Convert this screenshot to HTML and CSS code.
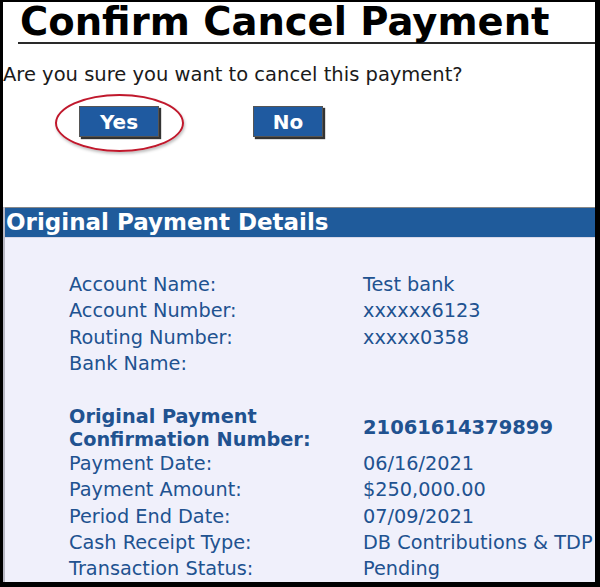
FILE: index.html
```html
<!DOCTYPE html>
<html lang="en">
<head>
<meta charset="utf-8">
<title>Confirm Cancel Payment</title>
<link rel="stylesheet" href="styles.css">
</head>
<body>
<div class="frame">
  <h1 class="title">Confirm Cancel Payment</h1>
  <p class="question">Are you sure you want to cancel this payment?</p>
  <div class="actions">
    <span class="btn-wrap highlighted"><button class="btn btn-yes">Yes</button></span>
    <span class="btn-wrap"><button class="btn btn-no">No</button></span>
  </div>
  <section class="details">
    <h2 class="details-head">Original Payment Details</h2>
    <div class="details-body">
      <div class="grid">
        <span class="lbl">Account Name:</span><span class="val">Test bank</span>
        <span class="lbl">Account Number:</span><span class="val">xxxxxx6123</span>
        <span class="lbl">Routing Number:</span><span class="val">xxxxx0358</span>
        <span class="lbl">Bank Name:</span><span class="val"></span>
      </div>
      <div class="grid conf">
        <span class="lbl strong">Original Payment<br>Confirmation Number:</span><span class="val strong">21061614379899</span>
      </div>
      <div class="grid">
        <span class="lbl">Payment Date:</span><span class="val">06/16/2021</span>
        <span class="lbl">Payment Amount:</span><span class="val">$250,000.00</span>
        <span class="lbl">Period End Date:</span><span class="val">07/09/2021</span>
        <span class="lbl">Cash Receipt Type:</span><span class="val">DB Contributions &amp; TDP</span>
        <span class="lbl">Transaction Status:</span><span class="val">Pending</span>
      </div>
    </div>
  </section>
</div>
</body>
</html>
```

FILE: styles.css
```css
html, body {
  margin: 0;
  padding: 0;
  background: #000;
}
.frame {
  box-sizing: border-box;
  width: 600px;
  height: 587px;
  border-style: solid;
  border-color: #000;
  border-width: 2px 5px 5px 3px;
  background: #fff;
  display: flex;
  flex-direction: column;
  overflow: hidden;
  font-family: "DejaVu Sans", Verdana, sans-serif;
}
.title {
  margin: 0 0 0 15px;
  padding: 0 0 0 2px;
  font-size: 38.5px;
  font-weight: bold;
  line-height: 40px;
  color: #000;
  border-bottom: 2px solid #2a2a2a;
}
.question {
  margin: 19px 0 0 0;
  font-size: 19.5px;
  line-height: 24px;
  color: #1a1a1a;
}
.actions {
  display: flex;
  margin-top: 19px;
  padding-left: 76px;
  gap: 94px;
}
.btn-wrap {
  position: relative;
  display: inline-block;
}
.highlighted::after {
  content: "";
  position: absolute;
  left: -24px;
  top: -12px;
  width: 125px;
  height: 54px;
  border: 2px solid #c0182c;
  border-radius: 50%;
  box-shadow: 1px 2px 3px rgba(0,0,0,0.25);
}
.btn {
  display: block;
  height: 31px;
  padding: 0;
  background: #1f5aa0;
  color: #fff;
  font-family: "DejaVu Sans", Verdana, sans-serif;
  font-weight: bold;
  font-size: 20px;
  border: 1px solid #555;
  box-shadow: 2px 2px 1px #333;
}
.btn-yes { width: 80px; }
.btn-no { width: 70px; }
.details {
  margin-top: 70px;
  flex: 1;
  display: flex;
  flex-direction: column;
  border-left: 2px solid #b8b8c4;
}
.details-head {
  margin: 0;
  background: #1f5b9b;
  color: #fff;
  font-size: 23px;
  font-weight: bold;
  line-height: 29px;
  height: 29px;
  padding-left: 1px;
  border-top: 1px solid #888;
  border-bottom: 1px solid #d8d8e8;
}
.details-body {
  flex: 1;
  background: #f0f0fb;
  padding: 34px 0 0 64px;
}
.grid {
  display: grid;
  grid-template-columns: 294px 1fr;
  font-size: 19.3px;
  line-height: 26.3px;
  color: #215290;
}
.conf {
  margin-top: 28px;
  align-items: center;
}
.strong {
  font-weight: bold;
}
.conf .lbl {
  line-height: 23px;
}
.conf .val {
  font-size: 19.5px;
}
```
